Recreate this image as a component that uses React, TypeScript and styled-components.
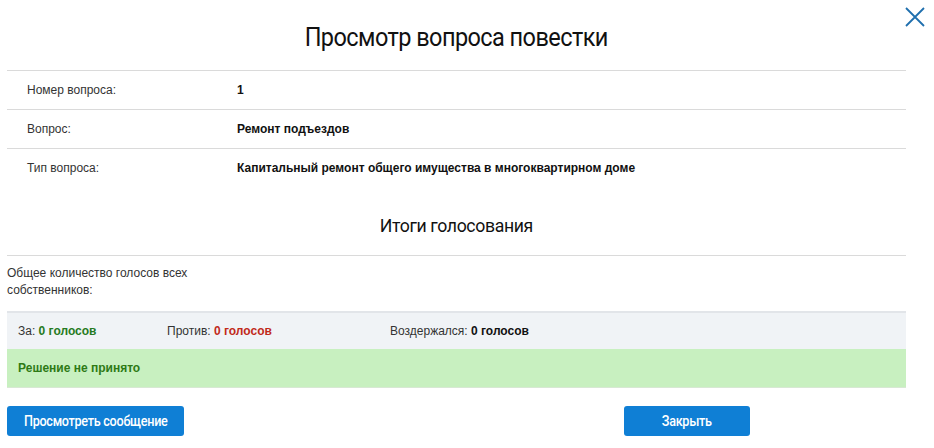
import React from "react";
import styled, { createGlobalStyle } from "styled-components";

const GlobalStyle = createGlobalStyle`
    html, body {
        margin: 0;
        padding: 0;
        background: #fff;
    }
    body {
        font-family: Arial, "Liberation Sans", sans-serif;
        font-size: 12px;
        color: #222;
    }
`;

const Modal = styled.div`
    position: relative;
    width: 934px;
    height: 448px;
    box-sizing: border-box;
    padding: 0 28px 0 7px;
`;

const CloseButton = styled.button`
    position: absolute;
    top: 6px;
    right: 8px;
    width: 22px;
    height: 22px;
    padding: 0;
    border: none;
    background: transparent;
    cursor: pointer;
`;

// narrow headline face: Roboto squeezed a little
const Narrow = styled.span<{ scale: number }>`
    display: inline-block;
    transform: scaleX(${({ scale }) => scale});
    white-space: nowrap;
`;

const Title = styled.h1`
    margin: 0;
    height: 71px;
    display: flex;
    align-items: center;
    justify-content: center;
    padding-top: 4px;
    box-sizing: border-box;
    font-family: Roboto, "Liberation Sans", sans-serif;
    font-weight: 400;
    font-size: 25px;
    letter-spacing: -0.6px;
    color: #111;
    border-bottom: 1px solid #dadada;
`;

const InfoRow = styled.div<{ last?: boolean }>`
    display: grid;
    grid-template-columns: 210px 1fr;
    align-items: center;
    height: 38px;
    padding-left: 20px;
    border-bottom: ${({ last }) => (last ? "none" : "1px solid #dadada")};
`;

const Label = styled.span`
    color: #333;
`;

const Value = styled.span`
    font-weight: bold;
    color: #111;
`;

const SubTitle = styled.h2`
    margin: 0;
    height: 69px;
    display: flex;
    align-items: center;
    justify-content: center;
    padding-top: 8px;
    box-sizing: border-box;
    font-family: Roboto, "Liberation Sans", sans-serif;
    font-weight: 400;
    font-size: 19px;
    letter-spacing: -0.4px;
    color: #111;
    border-bottom: 1px solid #dadada;
`;

const TotalText = styled.div`
    width: 190px;
    line-height: 17px;
    padding: 9px 0 12px;
    color: #333;
`;

const VotesBar = styled.div`
    display: flex;
    align-items: center;
    height: 38px;
    box-sizing: border-box;
    padding-left: 11px;
    background: #f0f3f6;
    border-top: 2px solid #e2e5e9;
`;

const VoteItem = styled.span<{ width: number }>`
    width: ${({ width }) => width}px;
    color: #333;
`;

const VoteValue = styled.b<{ tone: "green" | "red" | "dark" }>`
    color: ${({ tone }) =>
        tone === "green" ? "#267a22" : tone === "red" ? "#c12a1a" : "#111"};
`;

const Decision = styled.div`
    display: flex;
    align-items: center;
    height: 38px;
    padding-left: 11px;
    background: #c8f0c0;
    border-bottom: 1px solid #d8e8d4;
    font-weight: bold;
    color: #2e7a16;
`;

const Buttons = styled.div`
    display: flex;
    padding-top: 18px;
`;

const Button = styled.button<{ width: number; offset?: number }>`
    width: ${({ width }) => width}px;
    height: 30px;
    margin-left: ${({ offset }) => offset ?? 0}px;
    border: none;
    border-radius: 3px;
    background: #0f7fd5;
    color: #fff;
    font-family: Roboto, "Liberation Sans", sans-serif;
    font-weight: 500;
    font-size: 14px;
    letter-spacing: -0.3px;
    cursor: pointer;
`;

const App: React.FC = () => {
    return (
        <>
            <GlobalStyle />
            <Modal>
                <CloseButton aria-label="Закрыть">
                    <svg width="22" height="22" viewBox="0 0 22 22">
                        <path d="M2 2 L20 20 M20 2 L2 20" stroke="#1f6fae" strokeWidth="1.8" fill="none" />
                    </svg>
                </CloseButton>
                <Title>
                    <Narrow scale={0.94}>Просмотр вопроса повестки</Narrow>
                </Title>
                <InfoRow>
                    <Label>Номер вопроса:</Label>
                    <Value>1</Value>
                </InfoRow>
                <InfoRow>
                    <Label>Вопрос:</Label>
                    <Value>Ремонт подъездов</Value>
                </InfoRow>
                <InfoRow last>
                    <Label>Тип вопроса:</Label>
                    <Value>Капитальный ремонт общего имущества в многоквартирном доме</Value>
                </InfoRow>
                <SubTitle>
                    <Narrow scale={0.93}>Итоги голосования</Narrow>
                </SubTitle>
                <TotalText>Общее количество голосов всех собственников:</TotalText>
                <VotesBar>
                    <VoteItem width={149}>
                        За: <VoteValue tone="green">0 голосов</VoteValue>
                    </VoteItem>
                    <VoteItem width={223}>
                        Против: <VoteValue tone="red">0 голосов</VoteValue>
                    </VoteItem>
                    <VoteItem width={200}>
                        Воздержался: <VoteValue tone="dark">0 голосов</VoteValue>
                    </VoteItem>
                </VotesBar>
                <Decision>Решение не принято</Decision>
                <Buttons>
                    <Button width={177}>
                        <Narrow scale={0.9}>Просмотреть сообщение</Narrow>
                    </Button>
                    <Button width={126} offset={440}>
                        <Narrow scale={0.9}>Закрыть</Narrow>
                    </Button>
                </Buttons>
            </Modal>
        </>
    );
};

export default App;
